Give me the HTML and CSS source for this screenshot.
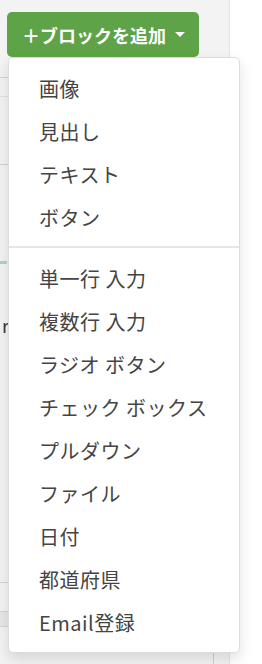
FILE: index.html
```html
<!DOCTYPE html>
<html>
<head>
  <title>ブロックを追加</title>
  <link rel="stylesheet" href="styles.css">
</head>
<body>
  <div class="editor">
    <div class="toolbar">
      <button class="add-block">＋ブロックを追加<span class="caret"></span></button>
    </div>

    <div class="canvas">
      <div class="row row-head"></div>
      <div class="row row-title"></div>
      <div class="row row-body">
        <span class="mark-teal"></span>
        <span class="mark-text">r(</span>
      </div>
      <div class="row row-field"></div>
      <div class="row row-foot"></div>
      <div class="row row-bottom"><span class="col-line"></span></div>
    </div>

    <ul class="menu">
      <li class="menu-item">画像</li>
      <li class="menu-item">見出し</li>
      <li class="menu-item">テキスト</li>
      <li class="menu-item">ボタン</li>
      <li class="menu-divider"></li>
      <li class="menu-item">単一行 入力</li>
      <li class="menu-item">複数行 入力</li>
      <li class="menu-item">ラジオ ボタン</li>
      <li class="menu-item">チェック ボックス</li>
      <li class="menu-item">プルダウン</li>
      <li class="menu-item">ファイル</li>
      <li class="menu-item">日付</li>
      <li class="menu-item">都道府県</li>
      <li class="menu-item">Email登録</li>
    </ul>
  </div>
</body>
</html>
```

FILE: styles.css
```css
body {
  margin: 0;
  background-color: #fff;
  font-family: "Noto Sans CJK JP", "Noto Sans", sans-serif;
  color: #444;
}
.editor {
  position: relative;
  width: 229px;
  height: 664px;
  background-color: #f3f3f3;
  border-right: 1px solid #e2e2e2;
}
.toolbar {
  padding: 12px 0 0 7px;
}
.add-block {
  display: flex;
  align-items: center;
  width: 192px;
  height: 45px;
  padding: 0 0 0 15px;
  background-color: #5fa348;
  color: #fff;
  border: none;
  border-radius: 5px;
  font-family: "Noto Sans CJK JP", sans-serif;
  font-size: 18px;
  font-weight: bold;
  cursor: pointer;
}
.caret {
  display: inline-block;
  width: 0;
  height: 0;
  margin-left: 9px;
  border-top: 5px solid #fff;
  border-left: 5px solid transparent;
  border-right: 5px solid transparent;
}

/* page content behind the menu */
.canvas {
  padding-top: 20px;
}
.row {
  border-top: 1px solid #d4d4d4;
}
.row-head {
  height: 18px;
}
.row-title {
  height: 67px;
  border-top-color: #e0e0e0;
}
.row-body {
  height: 418px;
  border-top-color: #d0d0d0;
  padding-top: 92px;
  box-sizing: border-box;
}
.mark-teal {
  display: block;
  width: 7px;
  height: 3px;
  margin-top: 4px;
  background-color: #9fd9c9;
}
.mark-text {
  display: block;
  margin-top: 48px;
  margin-left: 2px;
  font-size: 18px;
  color: #333;
}
.row-field {
  height: 28px;
}
.row-foot {
  height: 14px;
  background-color: #e7e7e7;
}
.row-bottom {
  height: 40px;
  border-top-color: #d8d8d8;
  display: flex;
  padding-left: 213px;
}
.col-line {
  width: 1px;
  background-color: #d0d0d0;
}

/* dropdown */
.menu {
  position: absolute;
  top: 57px;
  left: 8px;
  width: 230px;
  margin: 0;
  padding: 9px 0 8px;
  list-style: none;
  background-color: #fff;
  border: 1px solid #dcdcdc;
  border-radius: 5px;
  box-shadow: 0 6px 14px rgba(0, 0, 0, 0.12);
}
.menu-item {
  height: 43px;
  line-height: 43px;
  padding-left: 30px;
  font-size: 20px;
  letter-spacing: 0.5px;
  color: #444;
  white-space: nowrap;
}
.menu-divider {
  height: 2px;
  margin: 7px 0 9px;
  background-color: #e6e6e6;
}
```
